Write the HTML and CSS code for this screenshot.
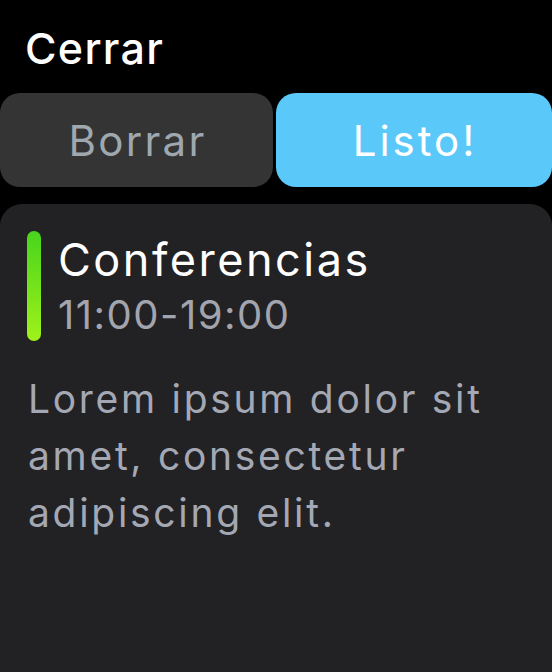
FILE: index.html
```html
<!DOCTYPE html>
<html lang="es">
<head>
<meta charset="utf-8">
<link rel="stylesheet" href="styles.css">
</head>
<body>
<div class="screen">
  <header class="top">Cerrar</header>
  <div class="actions">
    <button class="btn btn-delete">Borrar</button>
    <button class="btn btn-done">Listo!</button>
  </div>
  <section class="card">
    <div class="event">
      <div class="bar"></div>
      <div class="event-info">
        <div class="event-title">Conferencias</div>
        <div class="event-time">11:00-19:00</div>
      </div>
    </div>
    <p class="desc">Lorem ipsum dolor sit amet, consectetur adipiscing elit.</p>
  </section>
</div>
</body>
</html>
```
FILE: styles.css
```css
html, body {
  margin: 0;
  padding: 0;
  background: #000;
}
body {
  font-family: Inter, "Noto Sans", sans-serif;
  width: 552px;
  height: 672px;
  overflow: hidden;
}
.screen {
  display: flex;
  flex-direction: column;
  height: 672px;
}
.top {
  color: #fff;
  font-size: 43px;
  font-weight: 500;
  letter-spacing: 1.3px;
  padding: 24px 0 0 25px;
  height: 69px;
  line-height: 48px;
  box-sizing: border-box;
  height: 93px;
}
.actions {
  display: grid;
  grid-template-columns: 273px 1fr;
  gap: 3px;
  height: 94px;
}
.btn {
  border: 0;
  border-radius: 20px;
  font-family: inherit;
  font-size: 42px;
  font-weight: 400;
  letter-spacing: 2.3px;
  padding: 0 0 0 2px;
}
.btn-delete {
  background: #343434;
  color: #9ea8ae;
}
.btn-done {
  background: #5bc8fa;
  color: #fff;
  letter-spacing: 3px;
}
.card {
  margin-top: 17px;
  flex: 1;
  background: #222224;
  border-radius: 22px 22px 0 0;
  padding: 27px 27px 0 27px;
}
.event {
  display: flex;
  gap: 17px;
}
.bar {
  width: 14px;
  height: 110px;
  border-radius: 7px;
  background: linear-gradient(#48d41c, #a0f21a);
}
.event-info {
  display: flex;
  flex-direction: column;
}
.event-title {
  color: #fff;
  font-size: 45px;
  line-height: 57px;
  letter-spacing: 2.5px;
}
.event-time {
  color: #a2a5ae;
  font-size: 40px;
  line-height: 53px;
  letter-spacing: 1.5px;
}
.desc {
  margin: 29px 0 0 1px;
  color: #a4a8b4;
  font-size: 39px;
  line-height: 57px;
  letter-spacing: 2.7px;
}
```
